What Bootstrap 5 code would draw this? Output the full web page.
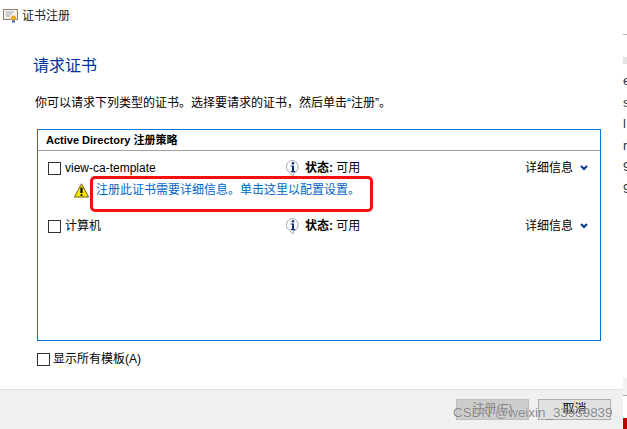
<!DOCTYPE html>
<html lang="zh-CN">
  <head>
    <meta charset="UTF-8" />
    <title>证书注册</title>
    <link rel="stylesheet" href="https://cdn.jsdelivr.net/npm/bootstrap@5.3.3/dist/css/bootstrap.min.css" />
    <style>
      html, body { height: 429px; overflow: hidden; }
      body { font-family: "Liberation Sans", "Noto Sans CJK SC", sans-serif; font-size: 12px; line-height: 16px; color: #000; position: relative; }
      .shell { width: 627px; height: 429px; }
      .dialog { width: 623px; height: 429px; }
      .title-row { height: 30px; padding: 2px 0 0 3px; gap: 3px; color: #222; }
      .body-area { padding: 0 22px 0 33px; }
      .req-title { font-size: 16px; line-height: 22px; font-weight: 400; color: #003399; margin: 25px 0 0; }
      .req-text { margin: 17px 0 0 2px; height: 18px; line-height: 18px; }
      .policy-box { margin: 17px 0 0 4px; width: 564px; height: 212px; border: 1px solid #0078d7; }
      .policy-head { height: 21px; line-height: 20px; padding-left: 8px; font-weight: 700; font-size: 11px; border-bottom: 1px solid #a0a0a0; }
      .policy-row { height: 16px; padding-left: 10px; }
      .row-one { margin-top: 9px; }
      .row-two { margin-top: 20px; }
      .fake-check { width: 13px; height: 13px; border: 1px solid #333; background: #fff; flex: none; }
      .tpl-name { width: 220px; margin-left: 4px; }
      .state-wrap { width: 240px; gap: 4px; }
      .state-label { font-weight: 700; }
      .more-wrap { gap: 7px; }
      .warn-row { height: 16px; margin-top: 6px; padding-left: 36px; gap: 7px; }
      .warn-link { color: #0066cc; }
      .show-all { margin: 10px 0 0 4px; gap: 3px; }
      .foot-bar { height: 40px; background: #f0f0f0; border-top: 1px solid #dfdfdf; padding: 9px 12px 0 0; gap: 9px; }
      .win-btn { width: 73px; height: 21px; line-height: 19px; text-align: center; border: 1px solid #adadad; background: #e1e1e1; }
      .win-btn.is-off { background: #ccc; border-color: #bfbfbf; color: #838383; }
      .side-strip { width: 4px; height: 429px; overflow: hidden; }
      .strip-line { height: 1px; background: #b5b5b5; margin-top: 34px; }
      .strip-block { height: 7px; background: #e4e4e4; margin-top: 22px; }
      .strip-chars { margin-top: 6px; font-size: 13px; line-height: 21.6px; color: #333; white-space: nowrap; }
      .strip-gray { height: 17px; background: #f2f2f2; border-bottom: 1px solid #a8a8a8; margin-top: 178px; box-sizing: content-box; }
      .strip-red { height: 11px; background: #c00000; margin-top: 22px; }
      .red-mark { position: absolute; left: 90px; top: 176px; width: 283px; height: 36px; border: 3px solid #f50f0f; border-radius: 5px; }
      .water-mark { position: absolute; left: 453px; top: 404px; font-size: 13.4px; line-height: 17px; color: rgba(110,110,110,.85); white-space: nowrap; text-shadow: 0 0 1px #fff; }
    </style>
  </head>
  <body>
    <div class="shell d-flex">
      <div class="dialog d-flex flex-column">
        <div class="title-row d-flex align-items-center">
          <svg width="16" height="16" viewBox="0 0 16 16">
            <rect x="0.5" y="1.5" width="14" height="10" fill="#f6f1e4" stroke="#8a8072" />
            <path d="M3 4h8M3 6h6M3 8h4" stroke="#9aa7c4" />
            <path d="M9 11v4l1.5-1 1.5 1v-4z" fill="#2f6fc4" />
            <circle cx="10.5" cy="10" r="2.6" fill="#e8a520" />
          </svg>
          <span>证书注册</span>
        </div>
        <div class="body-area flex-grow-1">
          <h1 class="req-title">请求证书</h1>
          <p class="req-text">你可以请求下列类型的证书。选择要请求的证书，然后单击“注册”。</p>
          <div class="policy-box">
            <div class="policy-head">Active Directory 注册策略</div>
            <div class="policy-row row-one d-flex align-items-center">
              <span class="fake-check"></span>
              <span class="tpl-name">view-ca-template</span>
              <span class="state-wrap d-flex align-items-center">
                <svg width="16" height="18" viewBox="0 0 16 18">
                  <path d="M8 1.500a6.500 6.500 0 0 0-3.500 12L8 17l.5-3A6.500 6.500 0 0 0 8 1.500z" fill="#fff" stroke="#a8a8a8" />
                  <circle cx="8" cy="4.200" r="1.300" fill="#14336a" />
                  <path d="M5.800 6.500h3.200V12h1.300v1.200H5.700V12H7V7.600H5.800z" fill="#14336a" />
                </svg>
                <span><span class="state-label">状态:</span> 可用</span>
              </span>
              <span class="more-wrap d-flex align-items-center">
                <span>详细信息</span>
                <svg width="8" height="6" viewBox="0 0 8 6"><path d="M1 1l3 3 3-3" fill="none" stroke="#003399" stroke-width="2" /></svg>
              </span>
            </div>
            <div class="warn-row d-flex align-items-center">
              <svg width="15" height="15" viewBox="0 0 15 15">
                <path d="M7.500 .8L14.600 14H.4z" fill="#ffe600" stroke="#6f6410" stroke-linejoin="round" />
                <path d="M7.500 4.500v5.500" stroke="#000" stroke-width="2.200" />
                <circle cx="7.500" cy="12" r="1.100" fill="#000" />
              </svg>
              <span class="warn-link">注册此证书需要详细信息。单击这里以配置设置。</span>
            </div>
            <div class="policy-row row-two d-flex align-items-center">
              <span class="fake-check"></span>
              <span class="tpl-name">计算机</span>
              <span class="state-wrap d-flex align-items-center">
                <svg width="16" height="18" viewBox="0 0 16 18">
                  <path d="M8 1.500a6.500 6.500 0 0 0-3.500 12L8 17l.5-3A6.500 6.500 0 0 0 8 1.500z" fill="#fff" stroke="#a8a8a8" />
                  <circle cx="8" cy="4.200" r="1.300" fill="#14336a" />
                  <path d="M5.800 6.500h3.200V12h1.300v1.200H5.700V12H7V7.600H5.800z" fill="#14336a" />
                </svg>
                <span><span class="state-label">状态:</span> 可用</span>
              </span>
              <span class="more-wrap d-flex align-items-center">
                <span>详细信息</span>
                <svg width="8" height="6" viewBox="0 0 8 6"><path d="M1 1l3 3 3-3" fill="none" stroke="#003399" stroke-width="2" /></svg>
              </span>
            </div>
          </div>
          <div class="show-all d-flex align-items-center">
            <span class="fake-check"></span>
            <span>显示所有模板(A)</span>
          </div>
        </div>
        <div class="foot-bar d-flex justify-content-end">
          <div class="win-btn is-off">注册(E)</div>
          <div class="win-btn">取消</div>
        </div>
      </div>
      <div class="side-strip">
        <div class="strip-line"></div>
        <div class="strip-block"></div>
        <div class="strip-chars">e<br />s<br />l<br />r<br />9<br />9</div>
        <div class="strip-gray"></div>
        <div class="strip-red"></div>
      </div>
    </div>
    <div class="red-mark"></div>
    <div class="water-mark">CSDN @weixin_33939839</div>
  </body>
</html>
